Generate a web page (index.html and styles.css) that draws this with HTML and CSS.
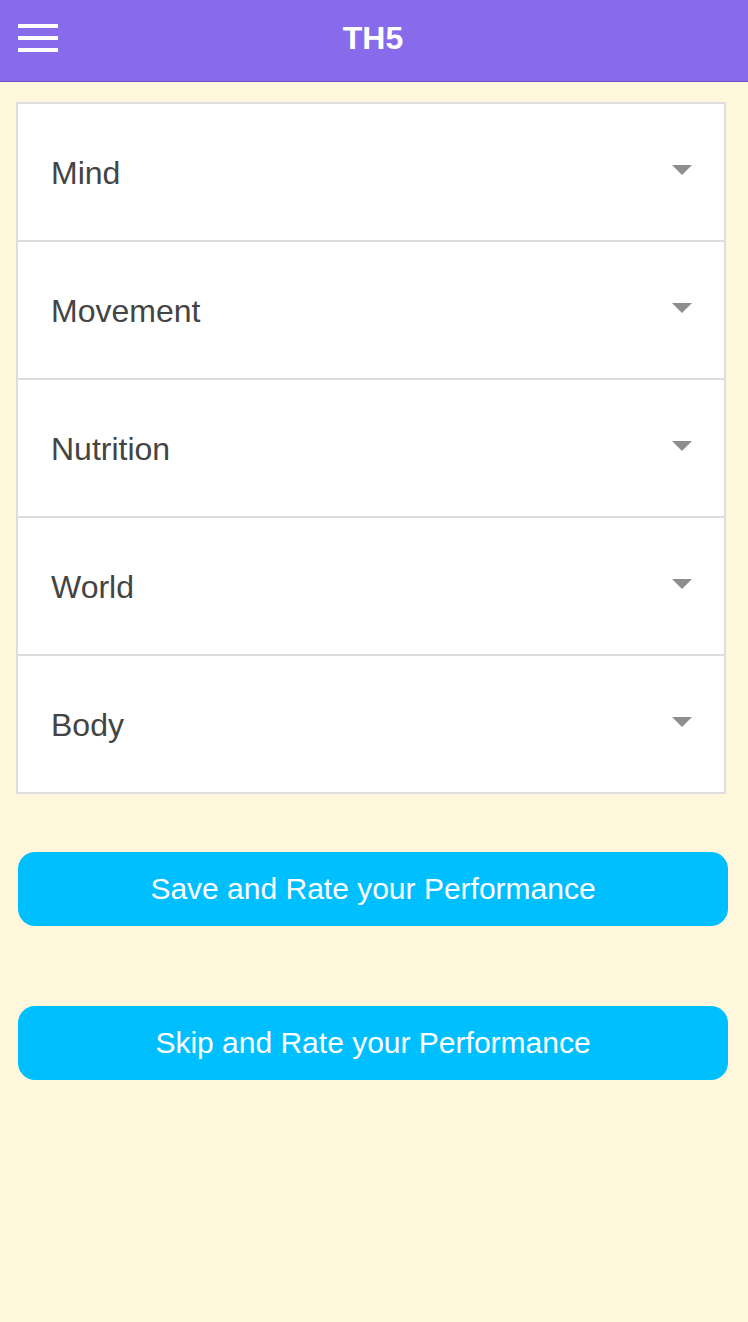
FILE: index.html
```html
<!DOCTYPE html>
<html>
<head>
<meta charset="utf-8">
<link rel="stylesheet" href="styles.css">
</head>
<body>
<header class="topbar">
  <div class="menu-btn"><span></span><span></span><span></span></div>
  <div class="title">TH5</div>
</header>
<main class="content">
  <div class="list">
    <div class="row"><span class="label">Mind</span><span class="caret"></span></div>
    <div class="row"><span class="label">Movement</span><span class="caret"></span></div>
    <div class="row"><span class="label">Nutrition</span><span class="caret"></span></div>
    <div class="row"><span class="label">World</span><span class="caret"></span></div>
    <div class="row"><span class="label">Body</span><span class="caret"></span></div>
  </div>
  <div class="actions">
    <button class="btn">Save and Rate your Performance</button>
    <button class="btn">Skip and Rate your Performance</button>
  </div>
</main>
</body>
</html>
```

FILE: styles.css
```css
html, body {
  margin: 0;
  padding: 0;
}
body {
  background: #fff7dc;
  font-family: "Liberation Sans", Arial, sans-serif;
  width: 748px;
  min-height: 1322px;
}
.topbar {
  position: relative;
  height: 81px;
  background: #886bea;
  border-bottom: 1px solid #6c52cf;
  display: flex;
  align-items: center;
  justify-content: center;
}
.menu-btn {
  position: absolute;
  left: 18px;
  top: 24px;
  width: 40px;
  display: flex;
  flex-direction: column;
  gap: 8px;
}
.menu-btn span {
  display: block;
  height: 4px;
  background: #fff;
}
.title {
  color: #fff;
  font-size: 32px;
  font-weight: bold;
  margin-left: -2px;
  margin-top: -4px;
}
.content {
  padding-top: 20px;
}
.list {
  margin: 0 22px 0 16px;
  background: #fff;
  border: 2px solid #dddddd;
}
.row {
  height: 136px;
  display: flex;
  align-items: center;
  justify-content: space-between;
  padding: 0 32px 0 33px;
  border-top: 2px solid #dddddd;
}
.row:first-child {
  border-top: none;
}
.label {
  font-size: 32px;
  color: #444444;
  margin-top: 2px;
}
.caret {
  width: 0;
  height: 0;
  border-left: 10px solid transparent;
  border-right: 10px solid transparent;
  border-top: 10px solid #8e8e8e;
  margin-top: -4px;
}
.actions {
  display: flex;
  flex-direction: column;
  gap: 80px;
  margin: 58px 20px 0 18px;
}
.btn {
  height: 74px;
  border: none;
  border-radius: 17px;
  background: #00bfff;
  color: #fff;
  font-family: "Liberation Sans", Arial, sans-serif;
  font-size: 30px;
  padding: 0;
  cursor: pointer;
}
```
